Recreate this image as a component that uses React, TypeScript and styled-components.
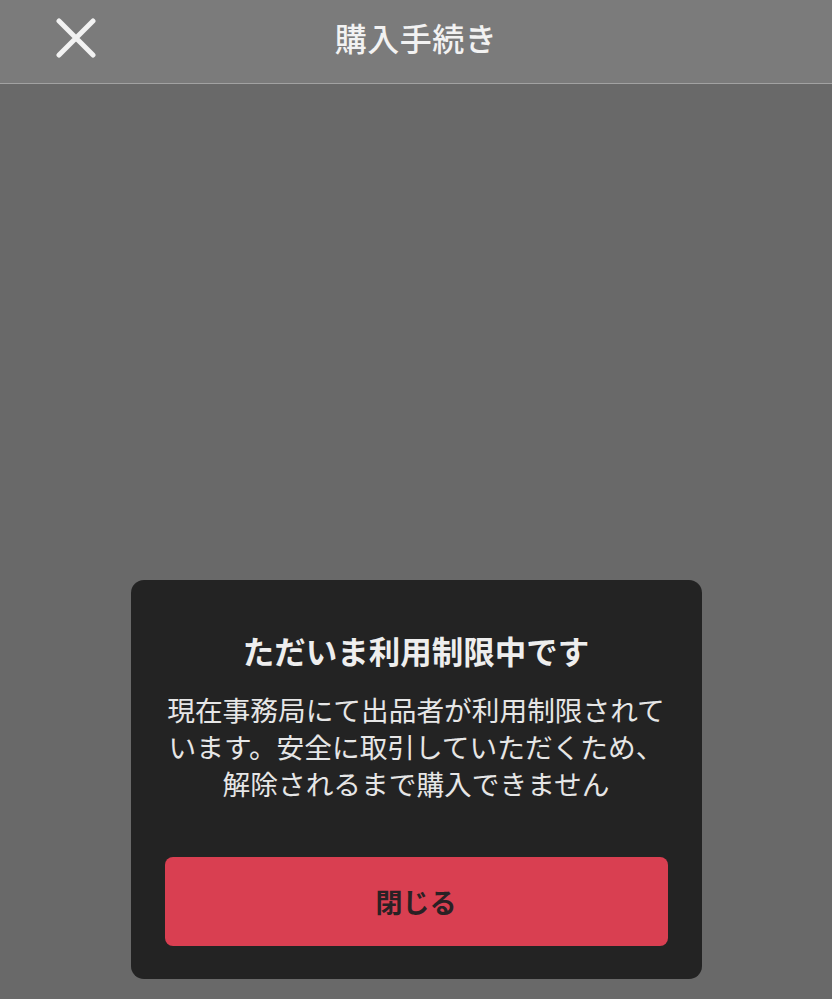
import styled, { createGlobalStyle } from "styled-components";

const GlobalStyle = createGlobalStyle`
  html, body {
    margin: 0;
    padding: 0;
    background: #696969;
  }
  body {
    font-family: "Noto Sans CJK JP", "Noto Sans", sans-serif;
  }
`;

const Page = styled.div`
  width: 832px;
  height: 999px;
  display: flex;
  flex-direction: column;
  background: #696969;
  overflow: hidden;
`;

const Header = styled.header`
  height: 83px;
  flex-shrink: 0;
  background: #7b7b7b;
  border-bottom: 1px solid #a2a2a2;
  display: grid;
  grid-template-columns: 140px 1fr 140px;
  align-items: center;
`;

const CloseButton = styled.button`
  background: none;
  border: none;
  padding: 0;
  margin: 0 0 8px 56px;
  width: 40px;
  height: 40px;
  display: flex;
  align-items: center;
  justify-content: center;
  cursor: pointer;
`;

const Title = styled.h1`
  margin: 0 0 10px;
  text-align: center;
  font-size: 32px;
  font-weight: 500;
  color: #f2f2f2;
  letter-spacing: 0.5px;
`;

const Content = styled.main`
  flex: 1;
  display: flex;
  flex-direction: column;
  justify-content: flex-end;
  align-items: center;
  padding-bottom: 20px;
`;

const Modal = styled.div`
  width: 571px;
  box-sizing: border-box;
  background: #232323;
  border-radius: 13px;
  padding: 48px 34px 33px;
  display: flex;
  flex-direction: column;
  align-items: center;
`;

const ModalTitle = styled.h2`
  margin: 0;
  font-size: 31.5px;
  line-height: 44px;
  font-weight: 700;
  color: #eeeeee;
  text-align: center;
`;

const ModalText = styled.p`
  margin: 19px 0 0;
  font-size: 27.7px;
  line-height: 37px;
  font-weight: 400;
  color: #e6e6e6;
  text-align: center;
  white-space: nowrap;
`;

const PrimaryButton = styled.button`
  margin-top: 55px;
  width: 100%;
  height: 89px;
  border: none;
  border-radius: 8px;
  background: #d93f51;
  color: #2a2124;
  font-family: "Noto Sans CJK JP", "Noto Sans", sans-serif;
  font-size: 27px;
  font-weight: 700;
  cursor: pointer;
`;

const App = () => {
  return (
    <>
      <GlobalStyle />
      <Page>
        <Header>
          <CloseButton aria-label="閉じる">
            <svg width="40" height="40" viewBox="0 0 40 40">
              <path
                d="M3 3 L37 37 M37 3 L3 37"
                stroke="#f2f2f2"
                strokeWidth="5"
                strokeLinecap="round"
                fill="none"
              />
            </svg>
          </CloseButton>
          <Title>購入手続き</Title>
          <div />
        </Header>
        <Content>
          <Modal>
            <ModalTitle>ただいま利用制限中です</ModalTitle>
            <ModalText>
              現在事務局にて出品者が利用制限されて
              <br />
              います。安全に取引していただくため、
              <br />
              解除されるまで購入できません
            </ModalText>
            <PrimaryButton>閉じる</PrimaryButton>
          </Modal>
        </Content>
      </Page>
    </>
  );
};

export default App;
